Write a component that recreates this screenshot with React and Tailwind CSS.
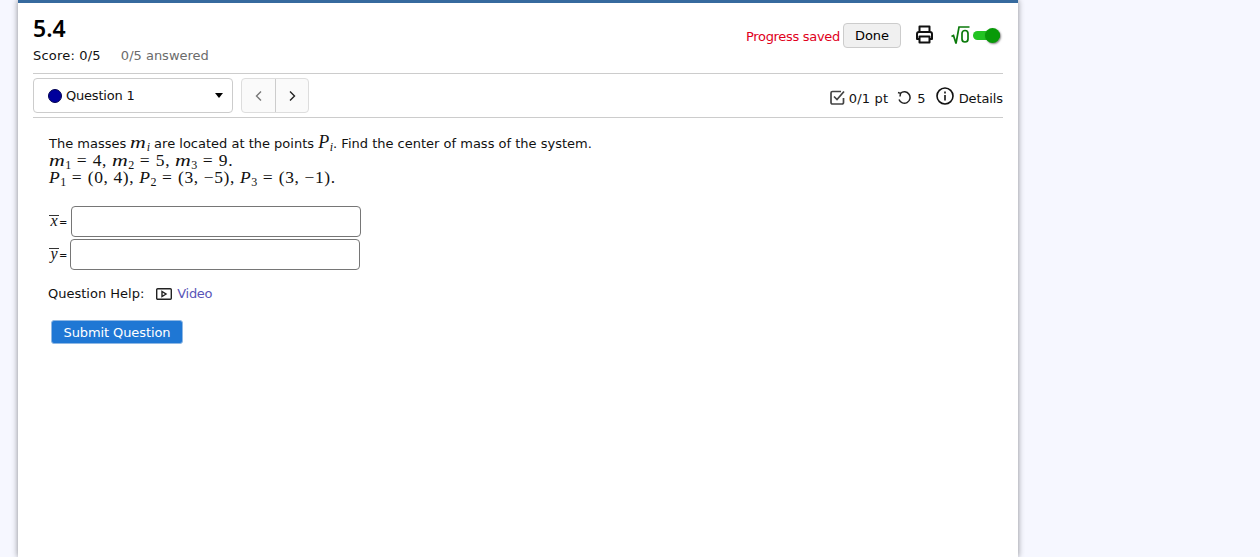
import React from 'react';

function Sub({ children }) {
  return <span className="relative top-[3px] text-[12px] leading-none not-italic tracking-normal">{children}</span>;
}

function M({ children }) {
  return <i className="font-['Liberation_Serif',serif]">{children}</i>;
}

function Mass() {
  return <i className="inline-block origin-left scale-x-125 mr-[3px] font-['Liberation_Serif',serif]">m</i>;
}

function Eq() {
  return <span className="mx-[5.5px]">=</span>;
}

export default function App() {
  return (
    <div className="h-[557px] overflow-hidden bg-[#f6f7ff] font-['DejaVu_Sans',sans-serif] text-[13px] text-[#111]">
      <div className="ml-[18px] w-[1000px] h-[557px] bg-white border-t-[3px] border-[#366a9e] shadow-[0_0_6px_rgba(0,0,0,0.45)] pl-[15px] pr-[15px]">
        {/* Header */}
        <div className="flex justify-between h-[71px] border-b border-[#ccc]">
          <div>
            <h1 className="font-['Noto_Sans',sans-serif] text-[23px] leading-[30px] font-semibold text-black mt-[10px]">5.4</h1>
            <div className="flex gap-[20px] mt-[3px] leading-[20px]">
              <span className="tracking-[0.2px]">Score: 0/5</span>
              <span className="text-[#6b6b6b]">0/5 answered</span>
            </div>
          </div>
          <div className="flex items-start pt-[18px]">
            <span className="text-[#e0001b] leading-[31px] mr-[3px] tracking-[-0.3px]">Progress saved</span>
            <button className="mt-[2px] h-[25px] w-[58px] rounded-[4px] border border-[#ccc] bg-[#f0f0f0] text-black">Done</button>
            <svg className="ml-[14px] mt-[4px]" width="19" height="19" viewBox="0 0 19 19" fill="none" stroke="#111" strokeWidth="2" strokeLinejoin="round">
              <path d="M4.5 7V1.5h10V7" />
              <path d="M4.5 14H2V9a2 2 0 0 1 2-2h11a2 2 0 0 1 2 2v5h-2.5" />
              <rect x="4.5" y="11.5" width="10" height="6" />
            </svg>
            <div className="ml-[17px] mt-[4px] flex items-center h-[20px]">
              <svg width="19" height="19" viewBox="0 0 19 19" fill="none" stroke="#0b7a0b" strokeWidth="1.7">
                <path d="M0.5 10.5l2-1 2.5 8L8 1h10.5" />
                <rect x="11" y="4.5" width="6" height="11.5" rx="3" />
              </svg>
              <div className="relative w-[27px] h-[9px] ml-[3px] rounded-full bg-[#22c322]">
                <div className="absolute right-0 top-[-3px] w-[15px] h-[15px] rounded-full bg-[#089a08] shadow-[1px_1px_2px_rgba(0,0,0,0.5)]"></div>
              </div>
            </div>
            <div className="w-[3px]"></div>
          </div>
        </div>

        {/* Question nav */}
        <div className="flex justify-between h-[44px] border-b border-[#ccc]">
          <div className="flex items-start pt-[4px]">
            <div className="flex items-center w-[200px] h-[35px] rounded-[4px] border border-[#ccc] pl-[14px] pr-[9px]">
              <span className="w-[14px] h-[14px] rounded-full bg-[#00009c] border border-[#000050]"></span>
              <span className="ml-[4px] mt-[1px] tracking-[-0.2px]">Question 1</span>
              <span className="ml-auto w-0 h-0 border-x-[4px] border-x-transparent border-t-[5px] border-t-black"></span>
            </div>
            <div className="flex ml-[8px] h-[35px] rounded-[4px] border border-[#ddd] bg-[#fafafa]">
              <button className="w-[34px] flex items-center justify-center border-r border-[#ccc]">
                <svg width="10" height="12" viewBox="0 0 10 12" fill="none" stroke="#777" strokeWidth="1.4"><path d="M7 1.5L2.5 6 7 10.5" /></svg>
              </button>
              <button className="w-[32px] flex items-center justify-center">
                <svg width="10" height="12" viewBox="0 0 10 12" fill="none" stroke="#222" strokeWidth="1.4"><path d="M3 1.5L7.5 6 3 10.5" /></svg>
              </button>
            </div>
          </div>
          <div className="flex items-center pt-[5px]">
            <svg width="15" height="15" viewBox="0 0 15 15" fill="none" stroke="#444" strokeWidth="1.7" className="mb-[2px]">
              <path d="M13.5 8V12.5a1.5 1.5 0 0 1-1.5 1.5H2.5A1.5 1.5 0 0 1 1 12.5V3a1.5 1.5 0 0 1 1.5-1.5H11" />
              <path d="M4 6.5L7 9.5l7-8" />
            </svg>
            <span className="ml-[4px] mt-[2px] tracking-[0.2px]">0/1 pt</span>
            <svg className="ml-[9px] mb-[1px]" width="15" height="14" viewBox="0 0 15 14" fill="none" stroke="#222" strokeWidth="1.5">
              <path d="M3.5 2.3A5.7 5.7 0 1 1 2 8.5" />
              <path d="M1 1.5L3.5 2.4 3 5.5" />
            </svg>
            <span className="ml-[5px] mt-[2px]">5</span>
            <svg className="ml-[10px] mb-[4px]" width="18" height="18" viewBox="0 0 18 18" fill="none" stroke="#111" strokeWidth="1.6">
              <circle cx="9" cy="9" r="8" />
              <path d="M9 8v5.5" />
              <path d="M9 4.5v2" />
            </svg>
            <span className="ml-[5px] mt-[2px] tracking-[-0.1px]">Details</span>
          </div>
        </div>

        {/* Question body */}
        <div className="pl-[16px] pt-[15px]">
          <div className="leading-[17px]">
            <div className="h-[19px] whitespace-nowrap">
              The masses <span className="text-[17.5px] tracking-[0.6px]"><Mass /><Sub><M>i</M></Sub></span> are located at the points <span className="text-[18px] tracking-[0.6px]"><M>P</M><Sub><M>i</M></Sub></span>. Find the center of mass of the system.
            </div>
            <div className="h-[17px] font-['Liberation_Serif',serif] text-[17.5px] tracking-[0.6px] whitespace-nowrap">
              <Mass /><Sub>1</Sub><Eq />4, <Mass /><Sub>2</Sub><Eq />5, <Mass /><Sub>3</Sub><Eq />9.
            </div>
            <div className="h-[17px] font-['Liberation_Serif',serif] text-[17.5px] tracking-[0.6px] whitespace-nowrap">
              <M>P</M><Sub>1</Sub><Eq />(0, 4), <M>P</M><Sub>2</Sub><Eq />(3, −5), <M>P</M><Sub>3</Sub><Eq />(3, −1).
            </div>
          </div>

          <div className="flex items-center mt-[20px] h-[31px]">
            <span className="flex items-baseline w-[22px] text-[10px] leading-none">
              <span className="inline-block w-[10px] border-t border-[#333] text-center font-['Liberation_Serif',serif] italic text-[16px] leading-[10px]">x</span>=
            </span>
            <input className="w-[290px] h-[31px] rounded-[4px] border border-[#767676] bg-white" />
          </div>
          <div className="flex items-center mt-[2px] h-[31px]">
            <span className="flex items-baseline w-[21px] text-[10px] leading-none">
              <span className="inline-block w-[10px] border-t border-[#333] text-center font-['Liberation_Serif',serif] italic text-[16px] leading-[10px]">y</span>=
            </span>
            <input className="w-[290px] h-[31px] rounded-[4px] border border-[#767676] bg-white" />
          </div>

          <div className="flex items-center mt-[14px] -ml-[1px] h-[20px]">
            <span>Question Help:</span>
            <svg className="ml-[12px]" width="16" height="12" viewBox="0 0 16 12" fill="none" stroke="#222" strokeWidth="1.4">
              <rect x="0.7" y="0.7" width="14.6" height="10.6" rx="1" />
              <path d="M6 3.5v5l4-2.5z" />
            </svg>
            <span className="ml-[5px] text-[#5a55b8] tracking-[-0.3px]">Video</span>
          </div>

          <button className="block mt-[16px] ml-[2px] w-[132px] h-[24px] rounded-[3px] bg-[#1f77d4] border border-[#8fb8e4] text-white text-[13px] leading-none tracking-[-0.1px]">
            Submit Question
          </button>
        </div>
      </div>
    </div>
  );
}
